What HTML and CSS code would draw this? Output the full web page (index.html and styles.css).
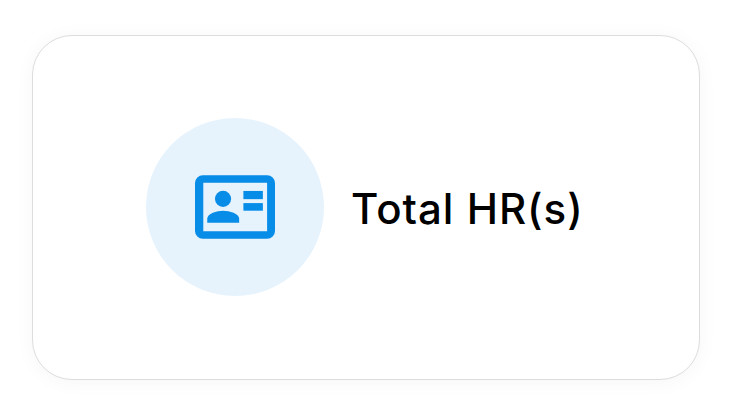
FILE: index.html
```html
<!DOCTYPE html>
<html lang="en">
<head>
  <meta charset="UTF-8" />
  <meta name="viewport" content="width=device-width, initial-scale=1.0" />
  <title>Total HRs</title>
  <link rel="stylesheet" href="styles.css">
</head>
<body>
  <div class="card">
    <div class="icon-circle">
      <svg class="icon" viewBox="0 0 81 64.500" aria-hidden="true">
        <path fill-rule="evenodd" d="M8 0H73A8 8 0 0 1 81 8V56.500A8 8 0 0 1 73 64.500H8A8 8 0 0 1 0 56.500V8A8 8 0 0 1 8 0ZM8.400 7.700V56.700H73V7.700Z" />
        <circle cx="28.400" cy="24" r="8.200" />
        <path d="M12.400 48.300V44C12.400 39 22 36 28.500 36S44.700 39 44.700 44V48.300Z" />
        <rect x="49" y="16" width="19.700" height="8.300" />
        <rect x="49" y="28.300" width="19.700" height="7.700" />
      </svg>
    </div>
    <span class="label">Total HR(s)</span>
  </div>
</body>
</html>
```

FILE: styles.css
```css
body {
  margin: 0;
  padding: 35px 32px 30px;
  background: white;
  font-family: Inter, "Open Sans", sans-serif;
}

.card {
  display: flex;
  align-items: center;
  gap: 27px;
  box-sizing: border-box;
  height: 345px;
  padding-left: 113px;
  padding-bottom: 1px;
  background: white;
  border: 1px solid #dddddd;
  border-radius: 40px;
  box-shadow: 0 2px 20px rgba(0, 0, 0, 0.04);
}

.icon-circle {
  display: flex;
  justify-content: center;
  align-items: center;
  width: 178px;
  height: 178px;
  border-radius: 50%;
  background: #e6f3fd;
}

.icon {
  width: 80px;
  height: 64px;
  fill: #078ce8;
}

.label {
  padding-top: 2px;
  font-size: 42px;
  font-weight: 500;
  letter-spacing: 1px;
  color: #000;
}
```
